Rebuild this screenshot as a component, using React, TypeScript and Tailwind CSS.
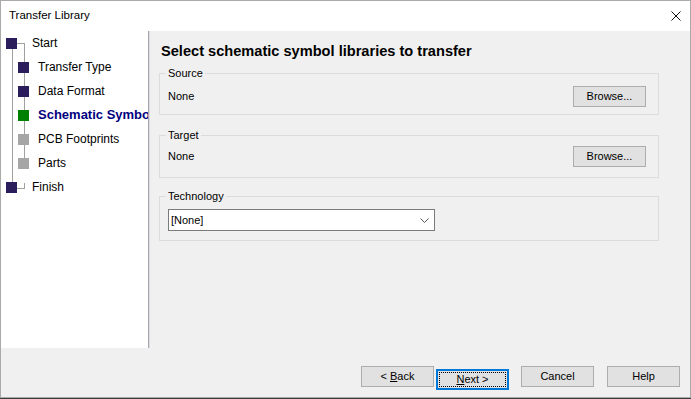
import React from "react";

const font = { fontFamily: '"Liberation Sans", Arial, sans-serif' };

type Step = { label: string; level: 0 | 1; state: "done" | "current" | "todo" };

const steps: Step[] = [
  { label: "Start", level: 0, state: "done" },
  { label: "Transfer Type", level: 1, state: "done" },
  { label: "Data Format", level: 1, state: "done" },
  { label: "Schematic Symbols", level: 1, state: "current" },
  { label: "PCB Footprints", level: 1, state: "todo" },
  { label: "Parts", level: 1, state: "todo" },
  { label: "Finish", level: 0, state: "done" },
];

function Button({ children, focused }: { children: React.ReactNode; focused?: boolean }) {
  if (focused) {
    return (
      <button className="w-[73px] h-[21px] border-2 border-[#0078d7] bg-[#e1e1e1] p-[1px] text-[11px] text-black">
        <span className="flex h-full w-full items-center justify-center border border-dotted border-black">
          <span>{children}</span>
        </span>
      </button>
    );
  }
  return (
    <button className="w-[73px] h-[21px] border border-[#adadad] bg-[#e1e1e1] text-[11px] text-black flex items-center justify-center">
      <span>{children}</span>
    </button>
  );
}

function Group({ title, className, children }: { title: string; className: string; children: React.ReactNode }) {
  return (
    <fieldset className={"w-[500px] border border-[#dcdcdc] pl-[8px] pr-[12px] " + className}>
      <legend className="-ml-[2px] px-[2px] text-[11px] leading-[13px] text-black">{title}</legend>
      {children}
    </fieldset>
  );
}

export default function App() {
  return (
    <div className="w-[691px] h-[399px] bg-[#3c3c3c] overflow-hidden" style={font}>
      <div className="w-[691px] h-[398px] border border-[#aaaaaa] bg-[#f0f0f0] flex flex-col">
        {/* title bar */}
        <div className="h-[30px] bg-white flex items-center justify-between pl-[8px] pr-[9px]">
          <span className="text-[11.5px] text-black">Transfer Library</span>
          <svg width="10" height="10" viewBox="0 0 10 10">
            <path d="M0.5 0.5 L9.5 9.5 M9.5 0.5 L0.5 9.5" stroke="#111" strokeWidth="1" fill="none" />
          </svg>
        </div>

        <div className="h-[317px] flex">
          {/* steps tree */}
          <div className="relative w-[147px] bg-white overflow-hidden">
            <svg className="absolute left-0 top-0" width="147" height="200">
              <rect x="11" y="17" width="1" height="134" fill="#a0a0a0" />
              <rect x="16" y="12" width="7" height="1" fill="#a0a0a0" />
              <rect x="23" y="12" width="1" height="120" fill="#a0a0a0" />
              <rect x="16" y="157" width="7" height="1" fill="#a0a0a0" />
              <rect x="23" y="152" width="1" height="6" fill="#a0a0a0" />
            </svg>
            {steps.map((s) => (
              <div
                key={s.label}
                className={
                  "relative h-[24px] flex items-center whitespace-nowrap " +
                  (s.level === 0 ? "pl-[5px] gap-[15px]" : "pl-[17px] gap-[9px]")
                }
              >
                <div
                  className={
                    "w-[11px] h-[11px] shrink-0 " +
                    (s.state === "done" ? "bg-[#2b1d5c]" : s.state === "current" ? "bg-[#008000]" : "bg-[#a6a6a6]")
                  }
                />
                <span
                  className={
                    s.state === "current" ? "text-[13px] font-bold text-[#000080]" : "text-[12px] text-black"
                  }
                >
                  {s.label}
                </span>
              </div>
            ))}
          </div>
          <div className="w-[2px] bg-[#a7a7b0] border-r border-[#dadae0]" />

          {/* page */}
          <div className="flex-1 pl-[9px] flex flex-col">
            <h1 className="mt-[11px] ml-[2px] text-[14.6px] leading-[18px] font-bold text-black">
              Select schematic symbol libraries to transfer
            </h1>
            <Group title="Source" className="mt-[7px] pb-[7px]">
              <div className="mt-[6px] flex items-center justify-between">
                <span className="text-[11px] text-black">None</span>
                <Button>Browse...</Button>
              </div>
            </Group>
            <Group title="Target" className="mt-[14px] pb-[10px]">
              <div className="mt-[4px] flex items-center justify-between">
                <span className="text-[11px] text-black">None</span>
                <Button>Browse...</Button>
              </div>
            </Group>
            <Group title="Technology" className="mt-[12px] pb-[9px]">
              <div className="mt-[6px] w-[267px] h-[22px] border border-[#7a7a7a] bg-white flex items-center justify-between pl-[2px] pr-[5px]">
                <span className="text-[11px] text-black">[None]</span>
                <svg width="9" height="5" viewBox="0 0 9 5">
                  <path d="M0.5 0.5 L4.5 4.5 L8.5 0.5" stroke="#555" strokeWidth="1" fill="none" />
                </svg>
              </div>
            </Group>
          </div>
        </div>

        {/* bottom buttons */}
        <div className="flex-1 flex justify-end items-start pt-[18px] pr-[10px]">
          <Button>
            &lt; <span className="underline">B</span>ack
          </Button>
          <div className="ml-[2px]">
            <Button focused>
              <span className="underline">N</span>ext &gt;
            </Button>
          </div>
          <div className="ml-[12px]">
            <Button>Cancel</Button>
          </div>
          <div className="ml-[13px]">
            <Button>Help</Button>
          </div>
        </div>
      </div>
    </div>
  );
}
